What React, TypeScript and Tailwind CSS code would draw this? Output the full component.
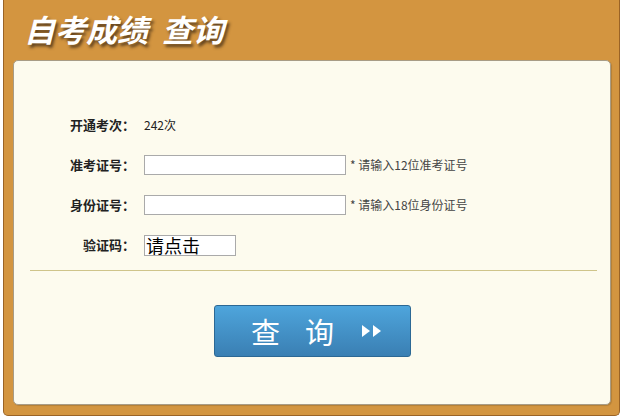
import React from "react";

const font = { fontFamily: '"Noto Sans CJK SC", "Noto Sans", sans-serif' };

function Row({ label, children }: { label: string; children: React.ReactNode }) {
  return (
    <div className="flex h-10 items-center">
      <div className="w-[121px] text-right text-[13px] font-bold text-[#222]">{label}</div>
      <div className="ml-[9px] flex items-center">{children}</div>
    </div>
  );
}

function Hint({ text }: { text: string }) {
  return <span className="ml-1 text-[12px] text-[#444]">* {text}</span>;
}

export default function App() {
  return (
    <div className="h-[419px] w-[632px] bg-white" style={font}>
      <div className="ml-[3px] h-[416px] w-[617px] rounded-b-[5px] border-x border-b border-[#9a6326] bg-[#d39540]">
        {/* Title */}
        <div className="flex h-[60px] items-center pl-[20px] pb-[4px]">
          <h1 className="text-[31px] font-bold italic leading-none text-white [text-shadow:2px_3px_3px_rgba(60,40,20,0.75)]">
            自考成绩<span className="ml-[14px]">查询</span>
          </h1>
        </div>

        {/* Form panel */}
        <div className="ml-[9px] h-[345px] w-[598px] rounded-[5px] border border-[#a89c86] bg-[#fdfbee] pt-[44px] shadow-[1px_1px_1px_rgba(0,0,0,0.15)]">
          <Row label="开通考次：">
            <span className="text-[12px] text-[#222]">242次</span>
          </Row>
          <Row label="准考证号：">
            <input className="h-[20px] w-[202px] border border-[#aaa] bg-white outline-none" />
            <Hint text="请输入12位准考证号" />
          </Row>
          <Row label="身份证号：">
            <input className="h-[20px] w-[202px] border border-[#aaa] bg-white outline-none" />
            <Hint text="请输入18位身份证号" />
          </Row>
          <Row label="验证码：">
            <div className="flex h-[21px] w-[92px] items-center border border-[#aaa] bg-white pl-[1px] text-[18px] leading-none text-black">
              请点击
            </div>
          </Row>

          <div className="ml-[16px] mr-[13px] mt-[5px] h-px bg-[#cfc48a]" />

          <div className="mt-[34px] flex justify-center">
            <button className="flex h-[52px] w-[197px] items-center justify-center rounded-[3px] border border-[#2c6894] bg-gradient-to-b from-[#4ea5dc] to-[#3a7fb3] pl-[10px] text-white">
              <span className="text-[29px] leading-none">查</span>
              <span className="ml-[25px] text-[29px] leading-none">询</span>
              <svg className="ml-[27px]" width="22" height="14" viewBox="0 0 22 14">
                <path d="M1 1 L9 7 L1 13 Z" fill="white" />
                <path d="M12 1 L20 7 L12 13 Z" fill="white" />
              </svg>
            </button>
          </div>
        </div>
      </div>
    </div>
  );
}
